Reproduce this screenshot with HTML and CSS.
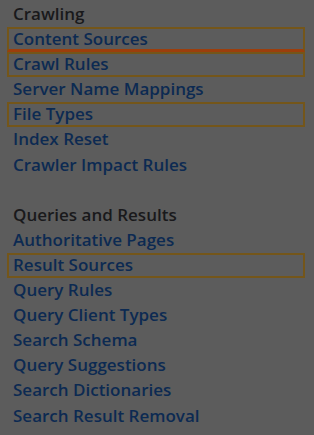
FILE: index.html
```html
<!DOCTYPE html>
<html>
<head>
<meta charset="utf-8">
<link rel="stylesheet" href="styles.css">
</head>
<body>
<div class="nav">
  <div class="row head">Crawling</div>
  <div class="row link boxed boxed-red">Content Sources</div>
  <div class="row link boxed">Crawl Rules</div>
  <div class="row link">Server Name Mappings</div>
  <div class="row link boxed">File Types</div>
  <div class="row link">Index Reset</div>
  <div class="row link">Crawler Impact Rules</div>
  <div class="row spacer"></div>
  <div class="row head">Queries and Results</div>
  <div class="row link">Authoritative Pages</div>
  <div class="row link boxed">Result Sources</div>
  <div class="row link">Query Rules</div>
  <div class="row link">Query Client Types</div>
  <div class="row link">Search Schema</div>
  <div class="row link">Query Suggestions</div>
  <div class="row link">Search Dictionaries</div>
  <div class="row link">Search Result Removal</div>
</div>
</body>
</html>
```

FILE: styles.css
```css
html, body {
  margin: 0;
  padding: 0;
  background: #5c5c5c;
  width: 314px;
  height: 435px;
  overflow: hidden;
}
.nav {
  display: flex;
  flex-direction: column;
  padding-top: 2px;
  font-family: "Open Sans", "Noto Sans", sans-serif;
  font-size: 17px;
  font-weight: 600;
}
.row {
  height: 25.1px;
  line-height: 20px;
  box-sizing: border-box;
  margin-left: 7px;
  width: 298px;
  padding-left: 4px;
  border: 2px solid transparent;
  white-space: nowrap;
  letter-spacing: 0;
}
.head {
  color: #19191b;
}
.link {
  color: #0c2a52;
}
.boxed {
  border-color: #74561a;
}
.boxed-red {
  border-bottom: 3px solid #9c3e0c;
}
```
